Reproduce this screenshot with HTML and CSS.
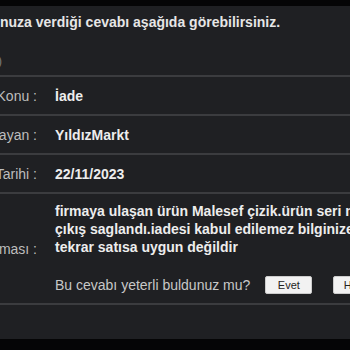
FILE: index.html
```html
<!DOCTYPE html>
<html>
<head>
    <title>Şikayet Cevabı</title>
    <link rel="stylesheet" href="styles.css">
</head>
<body>
    <div class="panel">
        <p class="intro">Başvurunuza verdiği cevabı aşağıda görebilirsiniz.</p>
        <p class="subtitle">Cevap Detayı (1)</p>

        <table class="details">
            <colgroup>
                <col class="label-col">
                <col>
            </colgroup>
            <tr>
                <td class="label">Şikayet Konu :</td>
                <td class="value">İade</td>
            </tr>
            <tr>
                <td class="label">Cevaplayan :</td>
                <td class="value">YıldızMarkt</td>
            </tr>
            <tr>
                <td class="label">Cevap Tarihi :</td>
                <td class="value">22/11/2023</td>
            </tr>
            <tr>
                <td class="label">Cevap Açıklaması :</td>
                <td class="value answer">
                    <div class="answer-text">firmaya ulaşan ürün Malesef çizik.ürün seri no çıkış saglandı.iadesi kabul edilemez bilginize. tekrar satısa uygun değildir</div>
                    <div class="feedback">
                        <span>Bu cevabı yeterli buldunuz mu?</span>
                        <button type="button" class="btn">Evet</button>
                        <button type="button" class="btn">Hayır</button>
                    </div>
                </td>
            </tr>
        </table>
    </div>
</body>
</html>
```

FILE: styles.css
```css
body {
    margin: 0;
    background-color: #050506;
    font-family: "Liberation Sans", Arial, sans-serif;
    overflow: hidden;
}

.panel {
    background-color: #1f2023;
    margin-top: 6px;
    margin-left: -100px;
    width: 560px;
    height: 333px;
}

.intro {
    margin: 0;
    padding: 8px 0 0 44px;
    font-size: 14px;
    font-weight: bold;
    color: #e6e6e6;
    line-height: 16px;
}

.subtitle {
    margin: 0;
    padding: 23px 0 0 0;
    width: 102px;
    height: 22px;
    text-align: right;
    font-size: 13px;
    color: #777;
    line-height: 16px;
}

.details {
    border-collapse: collapse;
    table-layout: fixed;
    width: 100%;
}

.label-col {
    width: 155px;
}

.details tr {
    border-top: 2px solid #3b3c3f;
}

.details tr:last-child {
    border-bottom: 2px solid #3b3c3f;
}

.label {
    padding: 0 18px 0 0;
    height: 37px;
    text-align: right;
    white-space: nowrap;
    font-size: 14px;
    color: #bdbdbd;
    vertical-align: middle;
}

.value {
    padding: 0;
    font-size: 14px;
    font-weight: bold;
    color: #ededed;
    white-space: nowrap;
}

.answer {
    padding-top: 8px;
    padding-bottom: 9px;
    white-space: normal;
}

.answer-text {
    line-height: 18px;
    width: 320px;
}

.feedback {
    display: flex;
    align-items: center;
    margin-top: 20px;
    font-weight: normal;
    color: #c8c8c8;
    white-space: nowrap;
}

.btn {
    flex-shrink: 0;
    width: 47px;
    height: 18px;
    margin-left: 15px;
    padding: 0;
    background-color: #f2f2f2;
    color: #222;
    border: 1px solid #ccc;
    border-radius: 2px;
    font-family: "Liberation Sans", Arial, sans-serif;
    font-size: 11px;
}

.btn + .btn {
    margin-left: 21px;
}
```
